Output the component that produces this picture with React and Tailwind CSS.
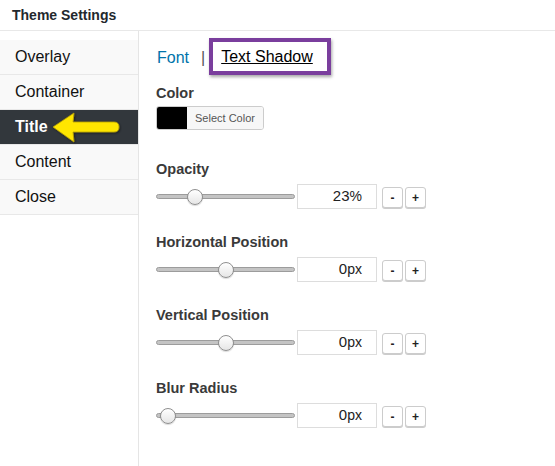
import React from 'react';

const menu = ['Overlay', 'Container', 'Title', 'Content', 'Close'];

const fields = [
  { label: 'Opacity', value: '23', unit: '%', pos: 0.25 },
  { label: 'Horizontal Position', value: '0', unit: 'px', pos: 0.5 },
  { label: 'Vertical Position', value: '0', unit: 'px', pos: 0.5 },
  { label: 'Blur Radius', value: '0', unit: 'px', pos: 0.03 },
];

const Arrow = () => (
  <svg className="absolute left-[50px] top-[110px]" width="72" height="36" viewBox="0 0 72 36">
    <defs>
      <filter id="sh" x="-10%" y="-20%" width="130%" height="150%">
        <feDropShadow dx="1" dy="1" stdDeviation="1" floodColor="#000" floodOpacity="0.45" />
      </filter>
    </defs>
    <path
      d="M3 17 L24 3 L23 12 L64 12 Q69 12 69 17 Q69 22 64 22 L23 22 L24 32 Z"
      fill="#ffe600"
      stroke="#b8a100"
      strokeWidth="0.8"
      strokeLinejoin="round"
      filter="url(#sh)"
    />
  </svg>
);

const Slider = ({ pos }) => (
  <div className="relative w-[139px] h-[18px] flex items-center">
    <div className="w-full h-[5px] rounded-full bg-[#c4c4c4] border border-[#9c9c9c]" />
    <div
      className="absolute top-[1px] w-[16px] h-[16px] rounded-full border border-[#8f8f8f] bg-gradient-to-b from-white to-[#e6e6e6] shadow-[0_1px_1px_rgba(0,0,0,0.15)]"
      style={{ left: `${pos * 123}px` }}
    />
  </div>
);

const StepBtn = ({ children }) => (
  <button className="w-[21px] h-[21px] flex items-center justify-center rounded-[3px] border border-[#cccccc] bg-white shadow-[0_1px_0_#cccccc] text-[12px] font-bold text-[#222] leading-none">
    {children}
  </button>
);

const Field = ({ label, value, unit, pos }) => (
  <div className="mb-[25px]">
    <div className="text-[14.5px] font-bold text-[#3a3a3a] leading-[16px] mb-[7px]">{label}</div>
    <div className="flex items-center">
      <Slider pos={pos} />
      <div className="ml-[2px] w-[80px] h-[25px] border border-[#dddddd] flex items-center justify-end pr-[14px] text-[15px] text-[#222]">
        {value}
        <span className="text-[14px]">{unit}</span>
      </div>
      <div className="ml-[5px] flex gap-[2px] mt-[2px]">
        <StepBtn>-</StepBtn>
        <StepBtn>+</StepBtn>
      </div>
    </div>
  </div>
);

export default function App() {
  return (
    <div className="relative w-[555px] h-[466px] bg-white overflow-hidden font-['Liberation_Sans',Arial,sans-serif]">
      <div className="h-[31px] border-b border-[#e8e8e8] px-[12px] flex items-center text-[14px] font-bold text-[#23282d]">
        Theme Settings
      </div>
      <div className="flex h-[435px]">
        <div className="w-[139px] border-r border-[#e5e5e5] pt-[9px]">
          {menu.map((m) => (
            <div
              key={m}
              className={`h-[35px] flex items-center pl-[15px] text-[16px] border-b border-[#e8e8e8] ${
                m === 'Title' ? 'bg-[#32373c] text-white font-semibold' : 'bg-[#f9f9f9] text-[#111]'
              }`}
            >
              {m}
            </div>
          ))}
        </div>
        <div className="flex-1 pl-[17px] pt-[7px]">
          <div className="flex items-center h-[37px] text-[16px]">
            <span className="text-[#0073aa] ml-[1px] mt-[3px]">Font</span>
            <span className="text-[#555] ml-[12px] mt-[3px]">|</span>
            <div className="ml-[4px] w-[122px] h-[37px] border-[4px] border-[#7a3e9d] shadow-[1px_2px_3px_rgba(0,0,0,0.35)] flex items-center pl-[8px]">
              <span className="underline text-black">Text Shadow</span>
            </div>
          </div>
          <div className="mt-[10px] text-[14.5px] font-bold text-[#3a3a3a] leading-[16px]">Color</div>
          <div className="mt-[5px] flex h-[24px] w-[108px] rounded-[3px] border border-[#cccccc] overflow-hidden">
            <div className="w-[30px] bg-black" />
            <div className="flex-1 bg-[#f7f7f7] flex items-center justify-center text-[11px] text-[#555]">Select Color</div>
          </div>
          <div className="mt-[31px]">
            {fields.map((f) => (
              <Field key={f.label} {...f} />
            ))}
          </div>
        </div>
      </div>
      <Arrow />
    </div>
  );
}
